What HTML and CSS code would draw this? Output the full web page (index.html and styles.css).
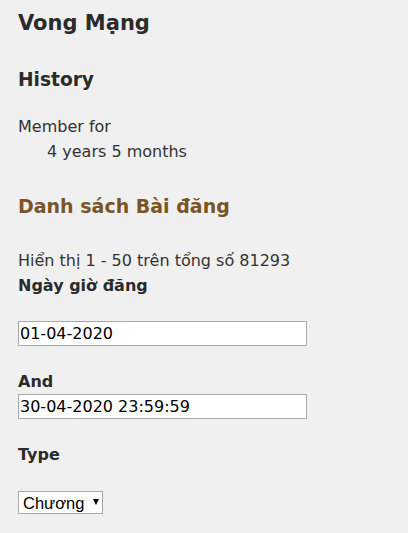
FILE: index.html
```html
<!DOCTYPE html>
<html lang="vi">
<head>
<meta charset="utf-8">
<title>Vong Mạng</title>
<link rel="stylesheet" href="styles.css">
</head>
<body>
<main class="page">
  <h1 class="title">Vong Mạng</h1>
  <h2 class="section">History</h2>
  <dl class="history">
    <dt>Member for</dt>
    <dd>4 years 5 months</dd>
  </dl>
  <h2 class="section brown">Danh sách Bài đăng</h2>
  <p class="summary">Hiển thị 1 - 50 trên tổng số 81293</p>
  <form class="filter">
    <label class="label" for="from">Ngày giờ đăng</label>
    <input class="field first" id="from" type="text" value="01-04-2020">
    <label class="label gap" for="to">And</label>
    <input class="field" id="to" type="text" value="30-04-2020 23:59:59">
    <label class="label gap" for="type">Type</label>
    <span class="select-wrap">
      <select class="select" id="type"><option>Chương</option></select>
    </span>
  </form>
</main>
</body>
</html>
```
FILE: styles.css
```css
html, body {
  margin: 0;
  padding: 0;
  background: #f0f0f0;
}
body {
  font-family: "DejaVu Sans", Verdana, sans-serif;
  font-size: 16px;
  color: #333;
}
.page {
  padding: 9px 18px 0 18px;
}
.title {
  margin: 0;
  font-size: 21px;
  line-height: 28px;
  font-weight: bold;
  color: #2b2b2b;
}
.section {
  margin: 31px 0 0 0;
  font-size: 18.6px;
  line-height: 24px;
  font-weight: bold;
  color: #2b2b2b;
}
.section.brown {
  margin-top: 30px;
  font-size: 19px;
  color: #7b5425;
}
.history {
  margin: 22px 0 0 0;
  line-height: 25px;
}
.history dt { margin: 0; }
.history dd { margin: 0 0 0 29px; }
.summary {
  margin: 30px 0 0 0;
  line-height: 25px;
}
.filter {
  display: flex;
  flex-direction: column;
  align-items: flex-start;
}
.label {
  display: block;
  font-weight: bold;
  line-height: 25px;
  color: #2b2b2b;
}
.label.gap { margin-top: 23px; }
.field {
  box-sizing: border-box;
  width: 289px;
  height: 25px;
  margin: 0;
  padding: 0 1px;
  border: 1px solid #a9a9a9;
  background: #fff;
  font-family: "DejaVu Sans", Verdana, sans-serif;
  font-size: 16px;
  color: #000;
  outline: none;
}
.field.first { margin-top: 23px; }
.select-wrap {
  position: relative;
  display: inline-block;
  margin-top: 24px;
}
.select {
  box-sizing: border-box;
  width: 85px;
  height: 23px;
  margin: 0;
  padding: 0 0 0 4px;
  border: 1px solid #a9a9a9;
  border-radius: 0;
  background: #fff;
  -webkit-appearance: none;
  appearance: none;
  font-family: "Liberation Sans", Arial, sans-serif;
  font-size: 16.5px;
  color: #000;
}
.select-wrap::after {
  content: "";
  position: absolute;
  right: 4px;
  top: 8px;
  border-left: 3px solid transparent;
  border-right: 3px solid transparent;
  border-top: 6px solid #000;
  pointer-events: none;
}
```
